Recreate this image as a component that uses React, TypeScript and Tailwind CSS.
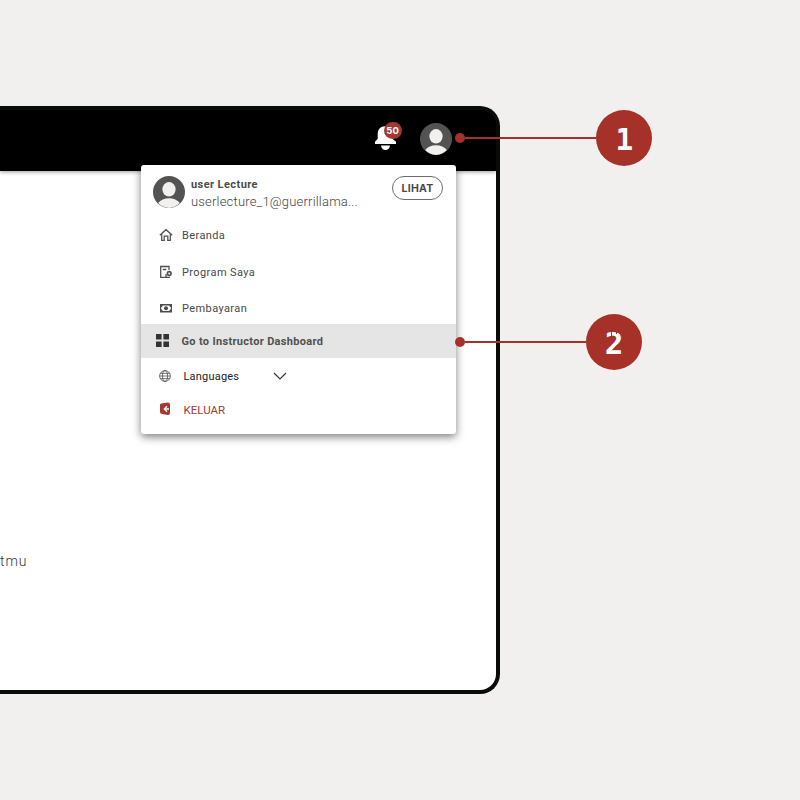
import type { ReactNode } from "react";

function Avatar({ className }: { className: string }) {
  return (
    <svg viewBox="0 0 32 32" className={className}>
      <circle cx="16" cy="16" r="16" fill="#535353" />
      <ellipse cx="16" cy="13.3" rx="6.6" ry="7.2" fill="#f1f0ef" />
      <path d="M5.2 27.1C7.5 23.9 11.5 22.3 16 22.3s8.500 1.600 10.800 4.800C24 30.200 20.200 32 16 32S8 30.200 5.200 27.100Z" fill="#f1f0ef" />
    </svg>
  );
}

function Bell() {
  return (
    <div className="relative h-[30px] w-[28px]">
      <svg viewBox="0 0 28 30" className="h-[30px] w-[28px]" fill="#fff">
        <path d="M1 22.900V20.700l2.700-2.900v-4.500c0-5 2.800-8 7.300-8s7.300 3 7.300 8v4.500l3.700 2.900v2.200ZM7 24.400h9c-.4 2.900-2 4.500-4.500 4.500S7.400 27.300 7 24.400Z" />
      </svg>
      <div className="absolute left-[10px] top-[0.500px] flex h-[17.500px] w-[17.500px] items-center justify-center rounded-full bg-[#a23a31] pt-px font-['Inter'] text-[9.500px] font-bold tracking-[0.200px] text-white">
        50
      </div>
    </div>
  );
}

function HomeIcon() {
  return (
    <svg viewBox="0 0 14 14" className="h-[14px] w-[14px]" fill="none" stroke="#505050" strokeWidth="1.250">
      <path d="M.8 7.200 7 1.700l6.200 5.500M2.700 6v6.400h2.500V8h3.600v4.400h2.500V6" />
    </svg>
  );
}

function ProgramIcon() {
  return (
    <svg viewBox="0 0 14 14" className="h-[14px] w-[14px]" fill="none" stroke="#505050" strokeWidth="1.300">
      <path d="M11 12.400H1.700V1.500h8.300v3.500M3.800 4.500h3.500M7 9v3" />
      <circle cx="10.200" cy="8.500" r="1.800" strokeWidth="1.700" />
    </svg>
  );
}

function MoneyIcon() {
  return (
    <svg viewBox="0 0 14 14" className="h-[14px] w-[14px]">
      <path d="M1 3h12v8.500H1Z" fill="#4c4c4c" />
      <path d="M3.600 4.400h6.800c0 .9.500 1.500 1.400 1.500v2.600c-.9 0-1.400.6-1.400 1.500H3.600c0-.9-.5-1.500-1.400-1.500V5.900c.9 0 1.400-.6 1.400-1.500Z" fill="#fff" />
      <circle cx="7" cy="7.200" r="2" fill="#4c4c4c" />
    </svg>
  );
}

function DashboardIcon() {
  return (
    <svg viewBox="0 0 13 13" className="h-[13px] w-[13px]" fill="#333">
      <path d="M0 0h5.600v5.600H0ZM7.400 0H13v5.600H7.400ZM0 7.400h5.600V13H0ZM7.400 7.400H13V13H7.400Z" />
    </svg>
  );
}

function GlobeIcon() {
  return (
    <svg viewBox="0 0 12 12" className="h-[12px] w-[12px]" fill="none" stroke="#505050" strokeWidth=".8">
      <circle cx="6" cy="6" r="5.400" />
      <ellipse cx="6" cy="6" rx="2.600" ry="5.400" />
      <path d="M.6 6h10.800M1.400 3.400h9.200M1.400 8.600h9.200" />
    </svg>
  );
}

function Row({ icon, label, className }: { icon: ReactNode; label: string; className: string }) {
  return (
    <div className={className}>
      {icon}
      <span className="ml-[9px] whitespace-nowrap pt-[2px]">{label}</span>
    </div>
  );
}

function Menu() {
  const row = "flex h-[36.500px] items-center pl-[18.500px] text-[11px] tracking-[0.400px] text-[#484848]";
  return (
    <div className="absolute left-[140.500px] top-[164.500px] flex h-[269px] w-[315.500px] flex-col rounded-[3px] bg-white shadow-[0_3px_9px_rgba(0,0,0,0.5)]">
      <div className="flex h-[52.500px] shrink-0 pl-[12.500px] pt-[11.500px]">
        <Avatar className="-mt-[0.500px] h-8 w-8" />
        <div className="ml-[6px] w-[201px] whitespace-nowrap">
          <div className="h-[17px] text-[11px] font-bold leading-[17px] tracking-[0.420px] text-[#4b4b4b]">user Lecture</div>
          <div className="h-[18px] text-[13px] font-light leading-[18px] tracking-[0.190px] text-[#444]">userlecture_1@guerrillama...</div>
        </div>
        <div className="-mt-[0.500px] flex h-[24px] w-[51px] items-center justify-center rounded-full border border-[#6c6c6c] pt-[2px] font-['Inter'] text-[10.500px] font-bold tracking-[0.300px] text-[#484848]">
          LIHAT
        </div>
      </div>
      <Row icon={<HomeIcon />} label="Beranda" className={row} />
      <Row icon={<ProgramIcon />} label="Program Saya" className={row} />
      <Row icon={<MoneyIcon />} label="Pembayaran" className={row} />
      <div className="-mt-[2.500px] flex h-[33.500px] shrink-0 items-center bg-[#e5e5e5] pl-[15.500px] text-[11px] font-bold tracking-[0.320px] text-[#505050]">
        <DashboardIcon />
        <span className="ml-[12.500px] pt-[2px]">Go to Instructor Dashboard</span>
      </div>
      <div className="flex h-[36px] shrink-0 items-center pl-[18px] text-[11px] tracking-[0.200px] text-[#222]">
        <GlobeIcon />
        <span className="ml-[13px] w-[89px] pt-[3px]">Languages</span>
        <svg viewBox="0 0 14 8" className="h-[8px] w-[14px]" fill="none" stroke="#333" strokeWidth="1.200">
          <path d="m1 1 6 6 6-6" />
        </svg>
      </div>
      <div className="flex h-[32px] shrink-0 items-center pl-[18px] text-[11.500px] text-[#a23a31]">
        <svg viewBox="0 0 12 14" className="-mt-[1px] h-[14px] w-[12px]">
          <path d="M2 1.500 9 .6q2 0 2 2v8.500q0 2-2 2L3 12Q1 11.700 1 10V3q0-1.300 1-1.500Z" fill="#a23a31" />
          <path d="M10 7H5.500M8 4.300 5.300 7 8 9.700" fill="none" stroke="#fff" strokeWidth="1.300" />
        </svg>
        <span className="ml-[13px] pt-[3px]">KELUAR</span>
      </div>
    </div>
  );
}

export default function App() {
  return (
    <main className="relative h-[800px] w-[800px] overflow-hidden bg-[#f2f0ef] pt-[106px] font-['Roboto',sans-serif]">
      <section className="flex h-[588px] w-[500px] flex-col overflow-hidden rounded-r-[20px] border-4 border-l-0 border-[#090a0a] bg-[linear-gradient(#000_60px,#fff_60px)] bg-no-repeat">
        <header className="flex h-[61px] shrink-0 items-start justify-end bg-black pr-[44px] pt-[11px] shadow-[0_1px_4px_rgba(0,0,0,0.4)]">
          <Bell />
          <Avatar className="ml-[18px] mt-[2px] h-[32px] w-[32px]" />
        </header>
        <p className="mt-[380px] text-[14px] font-light leading-[20px] tracking-[0.900px] text-[#333]">tmu</p>
      </section>
      <Menu />
      <div className="absolute left-[455px] top-[110px] flex h-14 w-[197px] items-center">
        <span className="h-[10px] w-[10px] rounded-full bg-[#a53128]" />
        <span className="h-[2px] flex-1 bg-[#a53128]" />
        <span className="flex h-14 w-14 items-center justify-center rounded-full bg-[#a53128] font-['DejaVu_Sans_Mono'] text-[31px] font-bold leading-none text-white">
          <span className="relative top-px scale-x-[0.950]">1</span>
        </span>
      </div>
      <div className="absolute left-[455px] top-[314px] flex h-14 w-[187px] items-center">
        <span className="h-[10px] w-[10px] rounded-full bg-[#a53128]" />
        <span className="h-[2px] flex-1 bg-[#a53128]" />
        <span className="relative flex h-14 w-14 items-center justify-center rounded-full bg-[#a53128] font-['DejaVu_Sans_Mono'] text-[31px] font-bold leading-none text-white">
          <span className="relative top-px">2</span>
          <span className="absolute left-[25px] top-[16px] h-[6px] w-px bg-[#a53128]" />
          <span className="absolute left-[30px] top-[16px] h-[4px] w-px bg-[#a53128]" />
        </span>
      </div>
    </main>
  );
}
